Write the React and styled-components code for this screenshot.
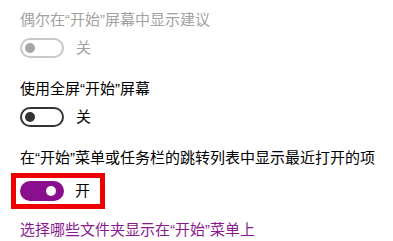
import React from 'react'
import styled, { createGlobalStyle } from 'styled-components'

const GlobalStyle = createGlobalStyle`
    body {
        margin: 0;
        background: #ffffff;
        font-family: "Liberation Sans", "Noto Sans CJK SC", sans-serif;
    }
`

const Page = styled.div`
    width: 393px;
    height: 241px;
    padding: 10px 0 0 20px;
    box-sizing: border-box;
    overflow: hidden;
    background: #ffffff;
`

const Setting = styled.div`
    margin-bottom: 21px;
`

const Label = styled.div`
    font-size: 15px;
    line-height: 20px;
    color: ${props => props.disabled ? '#a2a2a2' : '#000000'};
    white-space: nowrap;
    margin-bottom: ${props => props.highlight ? '5px' : '8px'};
`

const ToggleRow = styled.div`
    display: flex;
    align-items: center;
    gap: 12px;
    height: 20px;
`

const Highlight = styled.div`
    display: inline-flex;
    align-items: center;
    gap: 11px;
    border: 5px solid #ee0000;
    padding: 3px 10px 3px 4px;
    margin-left: -9px;
`

const Track = styled.div`
    position: relative;
    width: 44px;
    height: 20px;
    box-sizing: border-box;
    border-radius: 10px;
    border: 2px solid ${props => props.on ? props.accent : props.disabled ? '#c8c8c8' : '#333333'};
    background: ${props => props.on ? props.accent : 'transparent'};
`

const Thumb = styled.div`
    position: absolute;
    top: 3px;
    left: ${props => props.on ? '24px' : '3px'};
    width: 10px;
    height: 10px;
    border-radius: 50%;
    background: ${props => props.on ? '#ffffff' : props.disabled ? '#a6a6a6' : '#333333'};
`

const State = styled.span`
    font-size: 15px;
    line-height: 20px;
    color: ${props => props.disabled ? '#a2a2a2' : '#000000'};
`

const Link = styled.a`
    display: block;
    margin-top: 11px;
    font-size: 15px;
    line-height: 20px;
    color: #8a1a90;
    text-decoration: none;
    white-space: nowrap;
`

const ACCENT = '#8a0f8f'

const Toggle = ({ on, disabled }) => (
    <>
        <Track on={on} disabled={disabled} accent={ACCENT}>
            <Thumb on={on} disabled={disabled} />
        </Track>
        <State disabled={disabled}>{on ? '开' : '关'}</State>
    </>
)

export default function App() {
    return (
        <Page>
            <GlobalStyle />
            <Setting>
                <Label disabled>偶尔在“开始”屏幕中显示建议</Label>
                <ToggleRow>
                    <Toggle disabled />
                </ToggleRow>
            </Setting>
            <Setting>
                <Label>使用全屏“开始”屏幕</Label>
                <ToggleRow>
                    <Toggle />
                </ToggleRow>
            </Setting>
            <div>
                <Label highlight>在“开始”菜单或任务栏的跳转列表中显示最近打开的项</Label>
                <Highlight>
                    <Toggle on />
                </Highlight>
            </div>
            <Link href="#">选择哪些文件夹显示在“开始”菜单上</Link>
        </Page>
    )
}
